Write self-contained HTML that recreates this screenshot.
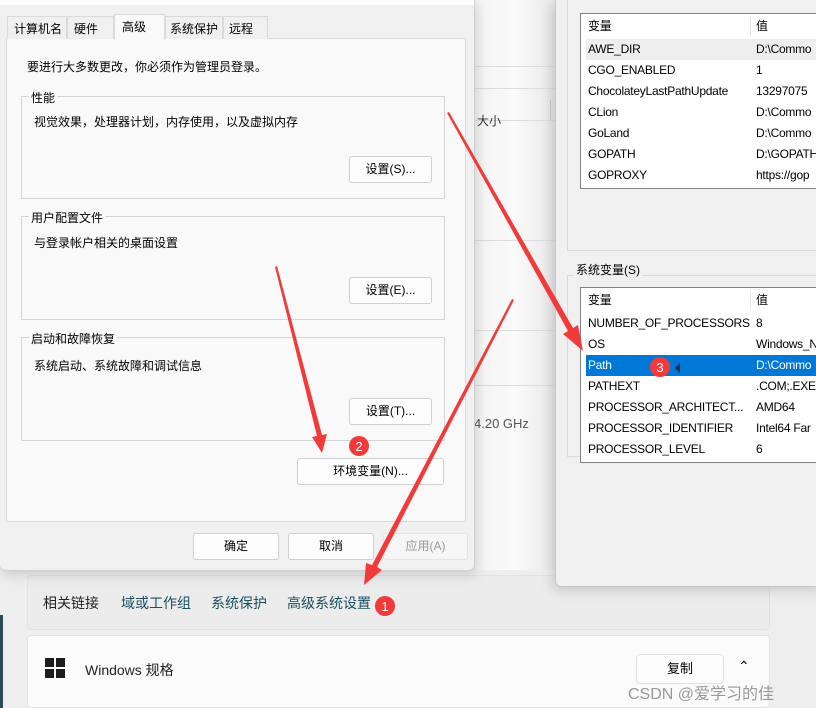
<!DOCTYPE html>
<html><head><meta charset="utf-8">
<style>
*{box-sizing:border-box;margin:0;padding:0}
body{width:816px;height:708px;overflow:hidden;position:relative;background:#ebebeb;font-family:"Liberation Sans","Noto Sans CJK SC",sans-serif;font-size:12px;color:#000}
.abs{position:absolute}
.btn{position:absolute;background:#fdfdfd;border:1px solid #d0d0d0;border-radius:3px;text-align:center;font-size:12px;line-height:25px;height:27px}
.gb{position:absolute;border:1px solid #d5d5d5}
.gl{position:absolute;top:-8px;left:7px;background:#f9f9f9;padding:0 2px;font-size:12px}
.row{position:absolute;left:0;height:21px;line-height:21px;font-size:12px;letter-spacing:-0.25px;white-space:nowrap;width:236px}
.row span{position:absolute}
</style></head><body>
<div class="abs" style="left:475px;top:0;width:80px;height:708px;background:linear-gradient(90deg,#f4f4f4,#fafafa 50%,#e8e8e8)"></div>
<div class="abs" style="left:475px;top:66px;width:80px;height:1px;background:#ddd"></div>
<div class="abs" style="left:475px;top:88px;width:80px;height:1px;background:#ddd"></div>
<div class="abs" style="left:475px;top:120px;width:80px;height:1px;background:#ddd"></div>
<div class="abs" style="left:477px;top:112px;font-size:12px;color:#333">大小</div>
<div class="abs" style="left:550px;top:100px;width:1px;height:20px;background:#ccc"></div>
<div class="abs" style="left:475px;top:240px;width:80px;height:1px;background:#ddd"></div>
<div class="abs" style="left:475px;top:330px;width:80px;height:1px;background:#ddd"></div>
<div class="abs" style="left:475px;top:385px;width:80px;height:1px;background:#ddd"></div>
<div class="abs" style="left:474px;top:416px;font-size:13px;color:#555">4.20 GHz</div>
<div class="abs" style="left:0;top:570px;width:816px;height:138px;background:#eeeeee"></div>
<div class="abs" style="left:27px;top:575px;width:743px;height:55px;background:#ececec;border:1px solid #e2e2e2;border-radius:4px"></div>
<div class="abs" style="left:43px;top:593px;font-size:14px;color:#222">相关链接</div>
<div class="abs" style="left:121px;top:593px;font-size:14px;color:#1a4f5f">域或工作组</div>
<div class="abs" style="left:211px;top:593px;font-size:14px;color:#1a4f5f">系统保护</div>
<div class="abs" style="left:287px;top:593px;font-size:14px;color:#1a4f5f">高级系统设置</div>
<div class="abs" style="left:27px;top:635px;width:743px;height:73px;background:#fbfbfb;border:1px solid #e2e2e2;border-radius:4px"></div>
<div class="abs" style="left:45px;top:658px;width:9px;height:9px;background:#1c1c1c"></div>
<div class="abs" style="left:56px;top:658px;width:9px;height:9px;background:#1c1c1c"></div>
<div class="abs" style="left:45px;top:669px;width:9px;height:9px;background:#1c1c1c"></div>
<div class="abs" style="left:56px;top:669px;width:9px;height:9px;background:#1c1c1c"></div>
<div class="abs" style="left:85px;top:660px;font-size:14px;color:#222">Windows 规格</div>
<div class="abs" style="left:636px;top:654px;width:88px;height:30px;background:#fdfdfd;border:1px solid #e0e0e0;border-radius:4px;text-align:center;line-height:28px;font-size:13px">复制</div>
<div class="abs" style="left:738px;top:658px;font-size:14px">&#8963;</div>
<div class="abs" style="left:0;top:615px;width:3px;height:93px;background:#2d4b55"></div>

<div class="abs" style="left:0;top:0;width:475px;height:571px;background:#f0f0f0;border-right:1px solid #d0d0d0;border-bottom:1px solid #d0d0d0;border-radius:0 0 6px 6px;box-shadow:2px 4px 12px rgba(0,0,0,.15)"></div>
<div class="abs" style="left:0;top:0;width:474px;height:5px;background:#fff"></div>
<div class="abs" style="left:6px;top:38px;width:460px;height:484px;background:#f9f9f9;border:1px solid #dadada"></div>
<div class="abs" style="left:7px;top:16px;width:60px;height:23px;border:1px solid #dadada;border-bottom:none;background:#f0f0f0;font-size:12px;padding:3px 0 0 6px">计算机名</div>
<div class="abs" style="left:67px;top:16px;width:47px;height:23px;border:1px solid #dadada;border-bottom:none;background:#f0f0f0;padding:3px 0 0 6px">硬件</div>
<div class="abs" style="left:114px;top:14px;width:51px;height:26px;border:1px solid #dadada;border-bottom:none;background:#f9f9f9;padding:3px 0 0 7px">高级</div>
<div class="abs" style="left:165px;top:16px;width:58px;height:23px;border:1px solid #dadada;border-bottom:none;background:#f0f0f0;padding:3px 0 0 4px">系统保护</div>
<div class="abs" style="left:223px;top:16px;width:45px;height:23px;border:1px solid #dadada;border-bottom:none;background:#f0f0f0;padding:3px 0 0 5px">远程</div>
<div class="abs" style="left:27px;top:58px">要进行大多数更改，你必须作为管理员登录。</div>
<div class="gb" style="left:21px;top:96px;width:424px;height:103px"><div class="gl">性能</div><div class="abs" style="left:12px;top:16px">视觉效果，处理器计划，内存使用，以及虚拟内存</div></div>
<div class="btn" style="left:349px;top:156px;width:83px">设置(S)...</div>
<div class="gb" style="left:21px;top:216px;width:424px;height:104px"><div class="gl">用户配置文件</div><div class="abs" style="left:12px;top:17px">与登录帐户相关的桌面设置</div></div>
<div class="btn" style="left:349px;top:277px;width:83px">设置(E)...</div>
<div class="gb" style="left:21px;top:337px;width:424px;height:104px"><div class="gl">启动和故障恢复</div><div class="abs" style="left:12px;top:19px">系统启动、系统故障和调试信息</div></div>
<div class="btn" style="left:349px;top:398px;width:83px">设置(T)...</div>
<div class="btn" style="left:297px;top:458px;width:147px">环境变量(N)...</div>
<div class="btn" style="left:193px;top:533px;width:86px;line-height:25px">确定</div>
<div class="btn" style="left:288px;top:533px;width:86px">取消</div>
<div class="btn" style="left:383px;top:533px;width:85px;color:#999;background:#f6f6f6;border-color:#e4e4e4">应用(A)</div>

<div class="abs" style="left:555px;top:0;width:270px;height:587px;background:#f0f0f0;border:1px solid #c8c8c8;border-top:none;border-radius:0 0 0 6px;box-shadow:-3px 4px 12px rgba(0,0,0,.15)"></div>
<div class="abs" style="left:567px;top:-5px;width:260px;height:256px;border:1px solid #dadada"></div>
<div class="abs" style="left:580px;top:13px;width:240px;height:176px;background:#fff;border:1px solid #828282">
 <div class="row" style="top:2px"><span style="left:7px">变量</span><span style="left:175px">值</span></div>
 <div class="abs" style="left:169px;top:2px;width:1px;height:20px;background:#e5e5e5"></div>
 <div class="row" style="top:25px;background:#eeeeee;left:5px;width:240px"><span style="left:2px">AWE_DIR</span><span style="left:170px">D:\Commo</span></div>
 <div class="row" style="top:46px"><span style="left:7px">CGO_ENABLED</span><span style="left:175px">1</span></div>
 <div class="row" style="top:67px"><span style="left:7px">ChocolateyLastPathUpdate</span><span style="left:175px">13297075</span></div>
 <div class="row" style="top:88px"><span style="left:7px">CLion</span><span style="left:175px">D:\Commo</span></div>
 <div class="row" style="top:109px"><span style="left:7px">GoLand</span><span style="left:175px">D:\Commo</span></div>
 <div class="row" style="top:130px"><span style="left:7px">GOPATH</span><span style="left:175px">D:\GOPATH</span></div>
 <div class="row" style="top:151px"><span style="left:7px">GOPROXY</span><span style="left:175px">https://gop</span></div>
</div>
<div class="abs" style="left:567px;top:275px;width:260px;height:182px;border:1px solid #dadada"></div>
<div class="abs" style="left:574px;top:261px;background:#f0f0f0;padding:0 2px">系统变量(S)</div>
<div class="abs" style="left:580px;top:287px;width:240px;height:176px;background:#fff;border:1px solid #828282">
 <div class="row" style="top:2px"><span style="left:7px">变量</span><span style="left:175px">值</span></div>
 <div class="abs" style="left:169px;top:2px;width:1px;height:20px;background:#e5e5e5"></div>
 <div class="row" style="top:25px"><span style="left:7px">NUMBER_OF_PROCESSORS</span><span style="left:175px">8</span></div>
 <div class="row" style="top:46px"><span style="left:7px">OS</span><span style="left:175px">Windows_N</span></div>
 <div class="row" style="top:67px;left:5px;width:240px;background:#0078d7;color:#fff"><span style="left:2px">Path</span><span style="left:170px">D:\Commo</span></div>
 <div class="row" style="top:88px"><span style="left:7px">PATHEXT</span><span style="left:175px">.COM;.EXE</span></div>
 <div class="row" style="top:109px"><span style="left:7px">PROCESSOR_ARCHITECT...</span><span style="left:175px">AMD64</span></div>
 <div class="row" style="top:130px"><span style="left:7px">PROCESSOR_IDENTIFIER</span><span style="left:175px">Intel64 Far</span></div>
 <div class="row" style="top:151px"><span style="left:7px">PROCESSOR_LEVEL</span><span style="left:175px">6</span></div>
</div>

<svg class="abs" style="left:0;top:0" width="816" height="708">
 <g fill="#f23a3a">
  <polygon points="447,113 449,112 573,328 578,325 583,351 563,334 568,331"/>
  <polygon points="275,267 277,266 322,435 327,434 322,453 312,437 317,436"/>
  <polygon points="512,299 514,300 377,567 382,570 364,585 366,563 372,565"/>
  <circle cx="359" cy="446" r="10"/>
  <circle cx="385" cy="606" r="10"/>
  <circle cx="660" cy="367" r="10"/>
  <polygon points="675,368 680,363 680,373" fill="#1b2a44"/>
 </g>
 <g fill="#fff" font-family="Liberation Sans" font-size="13" text-anchor="middle">
  <text x="359" y="451">2</text><text x="385" y="611">1</text><text x="660" y="372">3</text>
 </g>
</svg>
<div class="abs" style="left:628px;top:680px;font-size:16px;color:rgba(120,120,120,.75)">CSDN @爱学习的佳</div>
</body></html>
